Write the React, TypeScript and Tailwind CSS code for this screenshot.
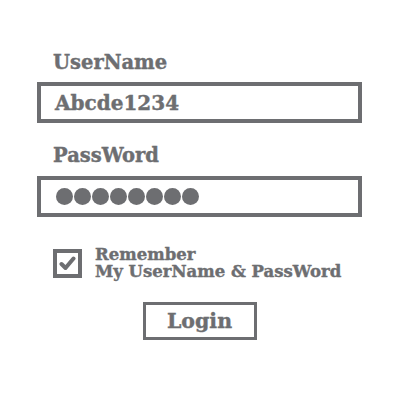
import React from 'react';

const font = { fontFamily: '"DejaVu Serif", "Liberation Serif", serif' };

export default function App() {
  return (
    <div className="w-[400px] h-[400px] bg-white text-[#6d6e71] [-webkit-text-stroke:0.4px_#6d6e71]" style={font}>
      <div className="flex flex-col pl-[37px] pt-[50px] w-[362px]">
        {/* username */}
        <div className="h-[26px] flex items-center pl-[16px] text-[19.5px] font-bold leading-none">UserName</div>
        <div className="mt-[6px] h-[41px] border-4 border-[#6d6e71] flex items-center pl-[14px] text-[20px] font-bold leading-none">
          Abcde1234
        </div>

        {/* password */}
        <div className="mt-[20px] h-[26px] flex items-center pl-[16px] text-[19.5px] font-bold leading-none">PassWord</div>
        <div className="mt-[7px] h-[41px] border-4 border-[#6d6e71] flex items-center pl-[15px] gap-[1px]">
          {[0, 1, 2, 3, 4, 5, 6, 7].map(i => (
            <span key={i} className="w-[17px] h-[17px] rounded-full bg-[#6d6e71]" />
          ))}
        </div>

        {/* remember */}
        <div className="mt-[30px] flex items-center gap-[13px] pl-[16px]">
          <div className="w-[29px] h-[29px] border-[4px] border-[#6d6e71] flex items-center justify-center">
            <svg width="17" height="15" viewBox="0 0 17 15">
              <path d="M2.5 8 L6.5 12 L14.5 2.5" fill="none" stroke="#6d6e71" strokeWidth="4" strokeLinecap="round" strokeLinejoin="round" />
            </svg>
          </div>
          <div className="flex flex-col text-[16.5px] font-bold leading-[17px] -mt-[1px]">
            <span>Remember</span>
            <span>My UserName &amp; PassWord</span>
          </div>
        </div>

        {/* login */}
        <div className="mt-[22px] flex justify-center">
          <div className="w-[114px] h-[38px] border-[3px] border-[#6d6e71] flex items-center justify-center text-[20.5px] font-bold leading-none">
            Login
          </div>
        </div>
      </div>
    </div>
  );
}
